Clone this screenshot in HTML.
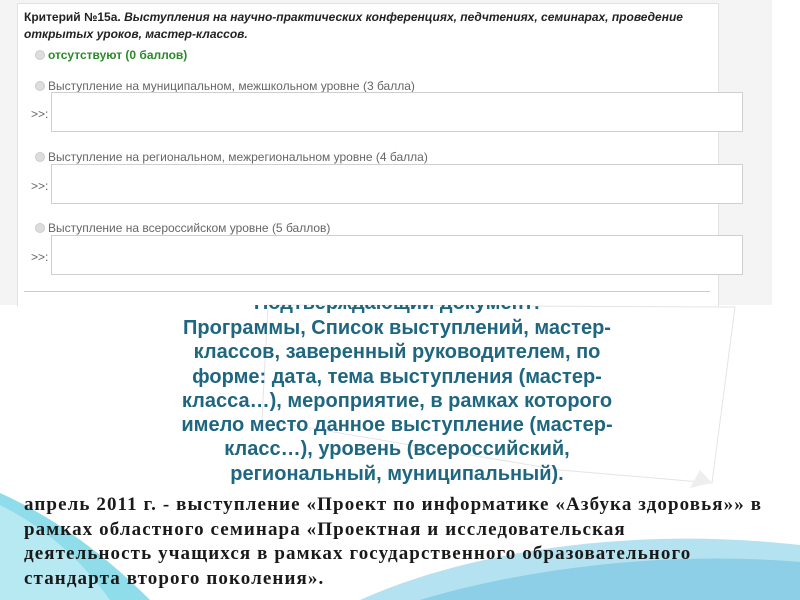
<!DOCTYPE html>
<html><head><meta charset="utf-8"><style>
body{margin:0;width:800px;height:600px;position:relative;overflow:hidden;background:#fff;font-family:"Liberation Sans",sans-serif}
.a{position:absolute}
.shot{left:0;top:0;width:772px;height:305px;background:#f4f4f4}
.panel{left:17px;top:3px;width:700px;height:302px;background:#fff;border:1px solid #e2e2e2;border-bottom:none}
.t{font-size:12px;color:#222;white-space:nowrap}
.g{font-size:12px;color:#666;white-space:nowrap}
.r{display:inline-block;width:8px;height:8px;border-radius:50%;background:#ddd;border:1px solid #ccc;vertical-align:-1px;margin-right:3px}
.ta{left:51px;width:690px;height:38px;border:1px solid #cfcfcf;background:#fff}
.bl{font-size:20px;font-weight:bold;color:#1f6680;text-align:center;width:560px;left:117px;line-height:24.3px;white-space:nowrap}
.bk{left:24px;font-family:"Liberation Serif",serif;font-weight:bold;font-size:19px;color:#1a1a1a;line-height:24.7px;white-space:nowrap;letter-spacing:1.1px}
</style></head><body>
<svg class="a" style="left:0;top:0" width="800" height="600">
<path d="M0 493 C60 520 110 560 150 600 L0 600Z" fill="#8fdcea"/>
<path d="M0 505 C50 530 85 565 110 600 L0 600Z" fill="#b6e9f2"/>
<path d="M360 600 C460 555 620 525 800 545 L800 600Z" fill="#b5e2f0"/>
<path d="M420 600 C520 570 660 550 800 562 L800 600Z" fill="#8ccfe6"/>
</svg>
<div class="a shot"></div>
<div class="a panel"></div>
<div class="a t" style="left:24px;top:10px;font-weight:bold">Критерий №15а. <i>Выступления на научно-практических конференциях, педчтениях, семинарах, проведение</i></div>
<div class="a t" style="left:24px;top:27px;font-weight:bold"><i>открытых уроков, мастер-классов.</i></div>
<div class="a t" style="left:35px;top:48px;color:#2a8a2a;font-weight:bold"><span class="r"></span>отсутствуют (0 баллов)</div>
<div class="a g" style="left:35px;top:79px"><span class="r"></span>Выступление на муниципальном, межшкольном уровне (3 балла)</div>
<div class="a ta" style="top:92px"></div><div class="a g" style="left:31px;top:107px">&gt;&gt;:</div>
<div class="a g" style="left:35px;top:150px"><span class="r"></span>Выступление на региональном, межрегиональном уровне (4 балла)</div>
<div class="a ta" style="top:164px"></div><div class="a g" style="left:31px;top:179px">&gt;&gt;:</div>
<div class="a g" style="left:35px;top:221px"><span class="r"></span>Выступление на всероссийском уровне (5 баллов)</div>
<div class="a ta" style="top:235px"></div><div class="a g" style="left:31px;top:250px">&gt;&gt;:</div>
<div class="a" style="left:24px;top:291px;width:686px;height:1px;background:#ccc"></div>
<svg class="a" style="left:0;top:0" width="800" height="600">
<path d="M268 305 L735 307 L712 483 L560 470 L262 420Z" fill="#fff" stroke="#e4e4e4" stroke-width="1"/>
<path d="M700 470 L712 483 L690 488Z" fill="#eee"/>
</svg>
<div class="a" style="left:0;top:305px;width:800px;height:11px;overflow:hidden"><div class="a bl" style="top:-14px">Подтверждающий документ:</div></div>
<div class="a bl" style="top:316px">Программы, Список выступлений, мастер-<br>классов, заверенный руководителем, по<br>форме: дата, тема выступления (мастер-<br>класса…), мероприятие, в рамках которого<br>имело место данное выступление (мастер-<br>класс…), уровень (всероссийский,<br>региональный, муниципальный).</div>
<div class="a bk" style="top:493px">апрель 2011 г. - выступление «Проект по информатике «Азбука здоровья»» в<br>рамках областного семинара «Проектная и исследовательская<br>деятельность учащихся в рамках государственного образовательного<br>стандарта второго поколения».</div>
</body></html>
